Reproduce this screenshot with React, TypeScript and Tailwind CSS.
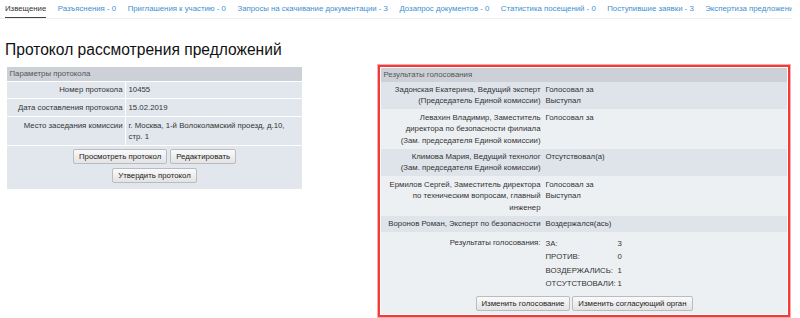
import React from 'react'

const tabs = [
  'Разъяснения - 0',
  'Приглашения к участию - 0',
  'Запросы на скачивание документации - 3',
  'Дозапрос документов - 0',
  'Статистика посещений - 0',
  'Поступившие заявки - 3',
  'Экспертиза предложений',
]

const votes = [
  { name: ['Задонская Екатерина, Ведущий эксперт', '(Председатель Единой комиссии)'], value: ['Голосовал за', 'Выступал'] },
  { name: ['Левахин Владимир, Заместитель', 'директора по безопасности филиала', '(Зам. председателя Единой комиссии)'], value: ['Голосовал за'] },
  { name: ['Климова Мария, Ведущий технолог', '(Зам. председателя Единой комиссии)'], value: ['Отсутствовал(а)'] },
  { name: ['Ермилов Сергей, Заместитель директора', 'по техническим вопросам, главный', 'инженер'], value: ['Голосовал за', 'Выступал'] },
  { name: ['Воронов Роман, Эксперт по безопасности'], value: ['Воздержался(ась)'] },
]

const totals = [
  ['ЗА:', '3'],
  ['ПРОТИВ:', '0'],
  ['ВОЗДЕРЖАЛИСЬ:', '1'],
  ['ОТСУТСТВОВАЛИ:', '1'],
]

function Btn({ children }: { children: React.ReactNode }) {
  return (
    <button className="h-[15px] px-[5px] rounded-[2px] border border-[#b9bcc0] bg-gradient-to-b from-[#fafafa] to-[#e3e3e3] text-[#222] leading-[13px] whitespace-nowrap">
      {children}
    </button>
  )
}

function Lines({ items }: { items: string[] }) {
  return (
    <>
      {items.map((t, i) => (
        <div key={i}>{t}</div>
      ))}
    </>
  )
}

export default function App() {
  return (
    <div className="w-[800px] h-[318px] overflow-hidden bg-white text-[#333] text-[7.8px] leading-[11.33px] font-['Liberation_Sans',Arial,sans-serif]">
      {/* tabs */}
      <div className="flex gap-[11.5px] pl-[5px] h-[19px] border-b border-[#eeeeee] whitespace-nowrap overflow-hidden w-[792px]">
        <div className="pt-[3px] h-[18.5px] border-b-2 border-[#444] text-[#333]">Извещение</div>
        {tabs.map(t => (
          <div key={t} className="pt-[3px] text-[#3d8fd1]">{t}</div>
        ))}
      </div>

      <h1 className="pl-[5px] mt-[21px] text-[15.6px] leading-[20px] text-[#111]">Протокол рассмотрения предложений</h1>

      <div className="flex items-start mt-[7px] pl-[7px]">
        {/* left panel */}
        <div className="w-[295px] bg-[#e2e7ee]">
          <div className="h-[13.5px] px-[2.5px] bg-[#cdd1d7] text-[#555] leading-[13.5px]">Параметры протокола</div>
          <div className="grid grid-cols-[118px_1fr] gap-x-px gap-y-[1.5px] bg-white pt-[1px] pb-[1.5px]">
            <div className="bg-[#e2e7ee] text-right px-[2.5px] py-[2.5px]">Номер протокола</div>
            <div className="bg-[#e2e7ee] px-[2.5px] py-[2.5px]">10455</div>
            <div className="bg-[#e2e7ee] text-right px-[2.5px] py-[2.5px]">Дата составления протокола</div>
            <div className="bg-[#e2e7ee] px-[2.5px] py-[2.5px]">15.02.2019</div>
            <div className="bg-[#e2e7ee] text-right px-[2.5px] py-[2.5px]">Место заседания комиссии</div>
            <div className="bg-[#e2e7ee] px-[2.5px] py-[2.5px]">
              <div>г. Москва, 1-й Волоколамский проезд, д.10,</div>
              <div>стр. 1</div>
            </div>
          </div>
          <div className="flex flex-col items-center gap-[4px] pt-[3px] pb-[6px]">
            <div className="flex gap-[3px]">
              <Btn>Просмотреть протокол</Btn>
              <Btn>Редактировать</Btn>
            </div>
            <Btn>Утвердить протокол</Btn>
          </div>
        </div>

        {/* right panel */}
        <div className="ml-[76px] mt-[-2px] w-[412px] border-[2px] border-[#f23c3c] shadow-[0_0_0_1px_#ffa8a8] p-px">
          <div className="bg-[#edf0f3]">
            <div className="h-[13.5px] px-[2.5px] bg-[#cdd1d7] text-[#555] leading-[13.5px]">Результаты голосования</div>
            {votes.map((v, i) => (
              <div key={i} className={`flex ${i % 2 === 0 ? 'bg-[#dfe4eb]' : 'bg-[#edf0f3]'}`}>
                <div className="w-[162px] shrink-0 text-right px-[2.5px] py-[2.6px] whitespace-nowrap">
                  <Lines items={v.name} />
                </div>
                <div className="px-[2.5px] py-[2.6px]">
                  <Lines items={v.value} />
                </div>
              </div>
            ))}
            <div className="flex pt-[2px]">
              <div className="w-[162px] shrink-0 text-right px-[2.5px] py-[2.5px]">Результаты голосования:</div>
              <div className="px-[2.5px] pt-[3px]">
                {totals.map(([k, n]) => (
                  <div key={k} className="flex leading-[13.33px]">
                    <div className="w-[72px]">{k}</div>
                    <div>{n}</div>
                  </div>
                ))}
              </div>
            </div>
            <div className="flex justify-center gap-[2px] pt-[6px] pb-[3px]">
              <Btn>Изменить голосование</Btn>
              <Btn>Изменить согласующий орган</Btn>
            </div>
          </div>
        </div>
      </div>
    </div>
  )
}
